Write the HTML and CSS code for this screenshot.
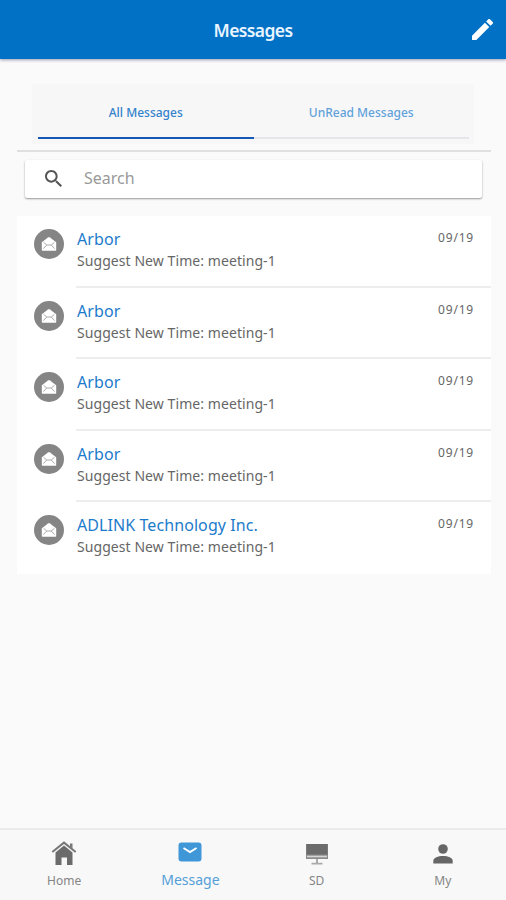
FILE: index.html
```
<!DOCTYPE html>
<html lang="en">
<head>
    <meta charset="UTF-8">
    <meta name="viewport" content="width=device-width, initial-scale=1.0">
    <title>Messages</title>
    <link rel="stylesheet" href="styles.css">
</head>
<body>
    <!-- shared envelope icon for the message rows -->
    <svg class="sprite" width="0" height="0">
        <symbol id="envelope" viewBox="0 0 16 16">
            <path d="M0.8 6.2 L7 1.4 Q8 0.7 9 1.4 L15.2 6.2 V14 Q15.2 14.8 14.4 14.8 H1.6 Q0.8 14.8 0.8 14 Z" fill="#fff"/>
            <path d="M2.5 6.3 L5.8 9 H10.2 L13.5 6.3 M2.3 12.6 L5.8 9 M13.7 12.6 L10.2 9" fill="none" stroke="#aaa" stroke-width="1"/>
        </symbol>
    </svg>

    <header class="header">
        <h1>Messages</h1>
        <svg class="edit" viewBox="3 3 18 18"><path fill="#fff" d="M3 17.25V21h3.75L17.81 9.94l-3.75-3.75L3 17.25zM20.71 7.04c.39-.39.39-1.02 0-1.41l-2.34-2.34c-.39-.39-1.02-.39-1.41 0l-1.83 1.83 3.75 3.75 1.83-1.83z"/></svg>
    </header>

    <main>
        <nav class="tabs">
            <a class="tab active"><span>All Messages</span></a>
            <a class="tab"><span>UnRead Messages</span></a>
        </nav>

        <div class="search-area">
            <div class="search">
                <svg viewBox="3 3 17.5 17.5"><path fill="#555" d="M15.5 14h-.79l-.28-.27C15.41 12.59 16 11.11 16 9.5 16 5.91 13.09 3 9.5 3S3 5.91 3 9.5 5.91 16 9.5 16c1.61 0 3.09-.59 4.23-1.57l.27.28v.79l5 4.99L20.49 19l-4.99-5zm-6 0C7.01 14 5 11.99 5 9.5S7.01 5 9.5 5 14 7.01 14 9.5 11.99 14 9.5 14z"/></svg>
                <span>Search</span>
            </div>
        </div>

        <ul class="list">
            <li class="item">
                <div class="avatar"><svg><use href="#envelope"/></svg></div>
                <div class="content">
                    <div class="text">
                        <h2>Arbor</h2>
                        <p>Suggest New Time: meeting-1</p>
                    </div>
                    <time>09/19</time>
                </div>
            </li>
            <li class="item">
                <div class="avatar"><svg><use href="#envelope"/></svg></div>
                <div class="content">
                    <div class="text">
                        <h2>Arbor</h2>
                        <p>Suggest New Time: meeting-1</p>
                    </div>
                    <time>09/19</time>
                </div>
            </li>
            <li class="item">
                <div class="avatar"><svg><use href="#envelope"/></svg></div>
                <div class="content">
                    <div class="text">
                        <h2>Arbor</h2>
                        <p>Suggest New Time: meeting-1</p>
                    </div>
                    <time>09/19</time>
                </div>
            </li>
            <li class="item">
                <div class="avatar"><svg><use href="#envelope"/></svg></div>
                <div class="content">
                    <div class="text">
                        <h2>Arbor</h2>
                        <p>Suggest New Time: meeting-1</p>
                    </div>
                    <time>09/19</time>
                </div>
            </li>
            <li class="item">
                <div class="avatar"><svg><use href="#envelope"/></svg></div>
                <div class="content">
                    <div class="text">
                        <h2>ADLINK Technology Inc.</h2>
                        <p>Suggest New Time: meeting-1</p>
                    </div>
                    <time>09/19</time>
                </div>
            </li>
        </ul>
    </main>

    <footer class="bottom-nav">
        <a class="nav-item">
            <svg viewBox="0 0 26 26">
                <path d="M4.5 12.5 L13 5.5 L21.5 12.5 V25 H16 V17.5 H10.5 V25 H4.5 Z" fill="#6b6b6b"/>
                <path d="M1.3 12 L13 2.6 L24.7 12" fill="none" stroke="#777" stroke-width="2"/>
                <path d="M19 3.5 H21.5 V8.5 L19 6.5 Z" fill="#777"/>
            </svg>
            <span>Home</span>
        </a>
        <a class="nav-item active">
            <svg viewBox="0 0 26 26">
                <rect x="1.5" y="2.5" width="23" height="19" rx="3" fill="#3f97d8"/>
                <path d="M6.5 8 L13 12 L19.5 8" fill="none" stroke="#fff" stroke-width="2"/>
            </svg>
            <span>Message</span>
        </a>
        <a class="nav-item">
            <svg viewBox="0 0 26 26">
                <rect x="2" y="4" width="22" height="15" fill="#8a8a8a"/>
                <rect x="2.5" y="4" width="21" height="10.5" fill="#6b6b6b"/>
                <path d="M3 15.7 H23 V17.3 H3 Z" fill="#d5d5d5"/>
                <path d="M12 19 H14 V22.8 H18.5 V24.5 H7.5 V22.8 H12 Z" fill="#aaa"/>
            </svg>
            <span>SD</span>
        </a>
        <a class="nav-item">
            <svg viewBox="0 0 26 26">
                <circle cx="13" cy="9" r="4.8" fill="#666"/>
                <path d="M3.3 23.5 V21 C3.3 17.5 8 16 13 16 S22.7 17.5 22.7 21 V23.5 Z" fill="#666"/>
            </svg>
            <span>My</span>
        </a>
    </footer>
</body>
</html>
```
FILE: styles.css
```
* {
    box-sizing: border-box;
}

body {
    font-family: "Noto Sans", sans-serif;
    background-color: #fafafa;
    display: flex;
    flex-direction: column;
    height: 100vh;
    margin: 0;
    color: #666;
}

h1, h2, p, ul {
    margin: 0;
    padding: 0;
}

svg {
    display: block;
}

.sprite {
    position: absolute;
}

.header {
    flex: none;
    display: grid;
    grid-template-columns: 34px 1fr 34px;
    align-items: center;
    height: 59px;
    background-color: #0071c5;
    box-shadow: 0 1px 3px rgba(60, 60, 110, 0.5);
}

.header h1 {
    grid-column: 2;
    text-align: center;
    color: #e9f4ff;
    font-size: 17.5px;
    font-weight: 600;
    letter-spacing: -0.6px;
    line-height: 24px;
    padding-top: 1px;
}

.edit {
    width: 21px;
    height: 21px;
}

main {
    flex: 1;
    padding: 25px 15px 0 17px;
}

.tabs {
    display: flex;
    margin: 0 0 0 15px;
    width: 442px;
    height: 60px;
    padding: 0 5px 5px 6px;
    background-color: #f7f7f7;
}

.tab {
    flex: 1;
    display: flex;
    justify-content: center;
    align-items: center;
    padding-top: 3px;
    border-bottom: 2px solid #e4e6ea;
    color: #5fa2db;
    font-size: 12px;
    font-weight: 500;
}

.tab.active {
    color: #3382cb;
    border-bottom-color: #1657b5;
}

.search-area {
    margin-top: 6px;
    padding: 8px 9px 0 8px;
    border-top: 2px solid #e0e0e0;
}

.search {
    display: flex;
    align-items: center;
    gap: 22px;
    height: 38px;
    padding: 0 0 1px 20px;
    background-color: #fff;
    border-radius: 2px;
    box-shadow: 0 1px 2px rgba(0, 0, 0, 0.4);
    color: #999;
    font-size: 16px;
}

.search span {
    padding-bottom: 1px;
}

.search svg {
    width: 17px;
    height: 17px;
}

.list {
    margin-top: 18px;
    background-color: #fff;
    list-style: none;
}

.item {
    display: flex;
    height: 71.6px;
    padding-left: 17px;
}

.avatar {
    flex: none;
    display: flex;
    justify-content: center;
    align-items: center;
    width: 30px;
    height: 30px;
    margin: 13px 12px 0 0;
    border-radius: 50%;
    background-color: #858585;
}

.avatar svg {
    width: 16px;
    height: 16px;
}

.content {
    flex: 1;
    display: flex;
    justify-content: space-between;
    padding: 12px 17px 0 1px;
    border-bottom: 2px solid #ededed;
}

.item:last-child .content {
    border-bottom: none;
}

.text h2 {
    color: #1c7bcb;
    font-size: 16px;
    font-weight: 400;
    letter-spacing: 0.08px;
    line-height: 22px;
}

.text p {
    font-size: 14px;
    letter-spacing: 0.07px;
    line-height: 22px;
}

time {
    font-size: 12px;
    letter-spacing: 0.8px;
    line-height: 19px;
}

.bottom-nav {
    flex: none;
    display: flex;
    height: 72px;
    padding-left: 1px;
    background-color: #f8f8f8;
    border-top: 2px solid #ebebeb;
}

.nav-item {
    flex: 1;
    display: flex;
    flex-direction: column;
    align-items: center;
    padding-top: 10px;
    color: #858585;
    font-size: 12px;
    line-height: 30px;
}

.nav-item.active {
    color: #559fd9;
    font-size: 14px;
    line-height: 28px;
}

.nav-item svg {
    width: 26px;
    height: 26px;
}
```
